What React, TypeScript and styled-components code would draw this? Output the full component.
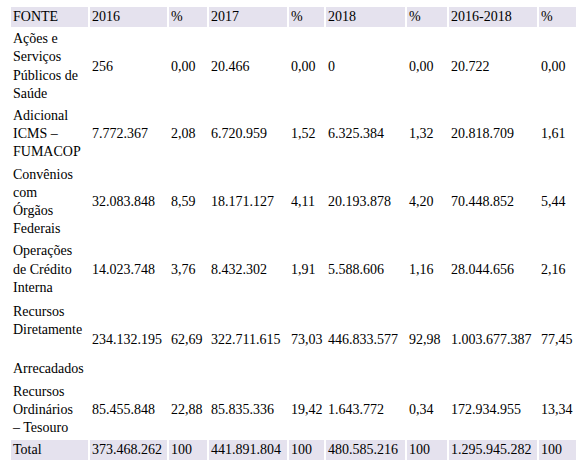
import { Fragment } from 'react'
import styled, { createGlobalStyle } from 'styled-components'

const GlobalStyle = createGlobalStyle`
  body {
    margin: 0;
    background: #fff;
  }
`

const Table = styled.table`
  margin: 5px 0 0 9px;
  width: 569px;
  border-spacing: 2px;
  table-layout: fixed;
  font-family: 'Liberation Serif', 'Times New Roman', serif;
  font-size: 14px;
  line-height: 18.2px;
  color: #000;
`

const HeadCell = styled.th<{ $w: number }>`
  box-sizing: border-box;
  width: ${(p) => p.$w}px;
  padding: 1px 2px;
  background: #e5e2ee;
  font-weight: normal;
  text-align: left;
  white-space: nowrap;
`

const FootCell = styled.td`
  padding: 1px 2px;
  background: #e5e2ee;
  white-space: nowrap;
`

const SourceCell = styled.td<{ $top?: number }>`
  padding: ${(p) => p.$top ?? 1}px 2px 1px;
  white-space: nowrap;
`

const BlankLine = styled.span`
  display: block;
  height: 21px;
`

const ValueCell = styled.td`
  padding: 1px 2px;
  white-space: nowrap;
`

const columns = [
  { label: 'FONTE', w: 77 },
  { label: '2016', w: 77 },
  { label: '%', w: 38 },
  { label: '2017', w: 78 },
  { label: '%', w: 35 },
  { label: '2018', w: 79 },
  { label: '%', w: 40 },
  { label: '2016-2018', w: 88 },
  { label: '%', w: 37 },
]

const rows = [
  {
    fonte: ['Ações e', 'Serviços', 'Públicos de', 'Saúde'],
    values: ['256', '0,00', '20.466', '0,00', '0', '0,00', '20.722', '0,00'],
  },
  {
    fonte: ['Adicional', 'ICMS –', 'FUMACOP'],
    values: ['7.772.367', '2,08', '6.720.959', '1,52', '6.325.384', '1,32', '20.818.709', '1,61'],
  },
  {
    fonte: ['Convênios', 'com', 'Órgãos', 'Federais'],
    values: ['32.083.848', '8,59', '18.171.127', '4,11', '20.193.878', '4,20', '70.448.852', '5,44'],
  },
  {
    fonte: ['Operações', 'de Crédito', 'Interna'],
    values: ['14.023.748', '3,76', '8.432.302', '1,91', '5.588.606', '1,16', '28.044.656', '2,16'],
  },
  {
    fonte: ['Recursos', 'Diretamente', '', 'Arrecadados'],
    top: 3,
    values: [
      '234.132.195',
      '62,69',
      '322.711.615',
      '73,03',
      '446.833.577',
      '92,98',
      '1.003.677.387',
      '77,45',
    ],
  },
  {
    fonte: ['Recursos', 'Ordinários', '– Tesouro'],
    values: ['85.455.848', '22,88', '85.835.336', '19,42', '1.643.772', '0,34', '172.934.955', '13,34'],
  },
]

const total = ['Total', '373.468.262', '100', '441.891.804', '100', '480.585.216', '100', '1.295.945.282', '100']

function App() {
  return (
    <>
      <GlobalStyle />
      <Table>
        <thead>
          <tr>
            {columns.map((c, i) => (
              <HeadCell key={i} $w={c.w}>
                {c.label}
              </HeadCell>
            ))}
          </tr>
        </thead>
        <tbody>
          {rows.map((r, i) => (
            <tr key={i}>
              <SourceCell $top={r.top}>
                {r.fonte.map((line, j) =>
                  line === '' ? (
                    <BlankLine key={j} />
                  ) : (
                    <Fragment key={j}>
                      {j > 0 && r.fonte[j - 1] !== '' && <br />}
                      {line}
                    </Fragment>
                  )
                )}
              </SourceCell>
              {r.values.map((v, j) => (
                <ValueCell key={j}>{v}</ValueCell>
              ))}
            </tr>
          ))}
        </tbody>
        <tfoot>
          <tr>
            {total.map((v, i) => (
              <FootCell key={i}>{v}</FootCell>
            ))}
          </tr>
        </tfoot>
      </Table>
    </>
  )
}

export default App
